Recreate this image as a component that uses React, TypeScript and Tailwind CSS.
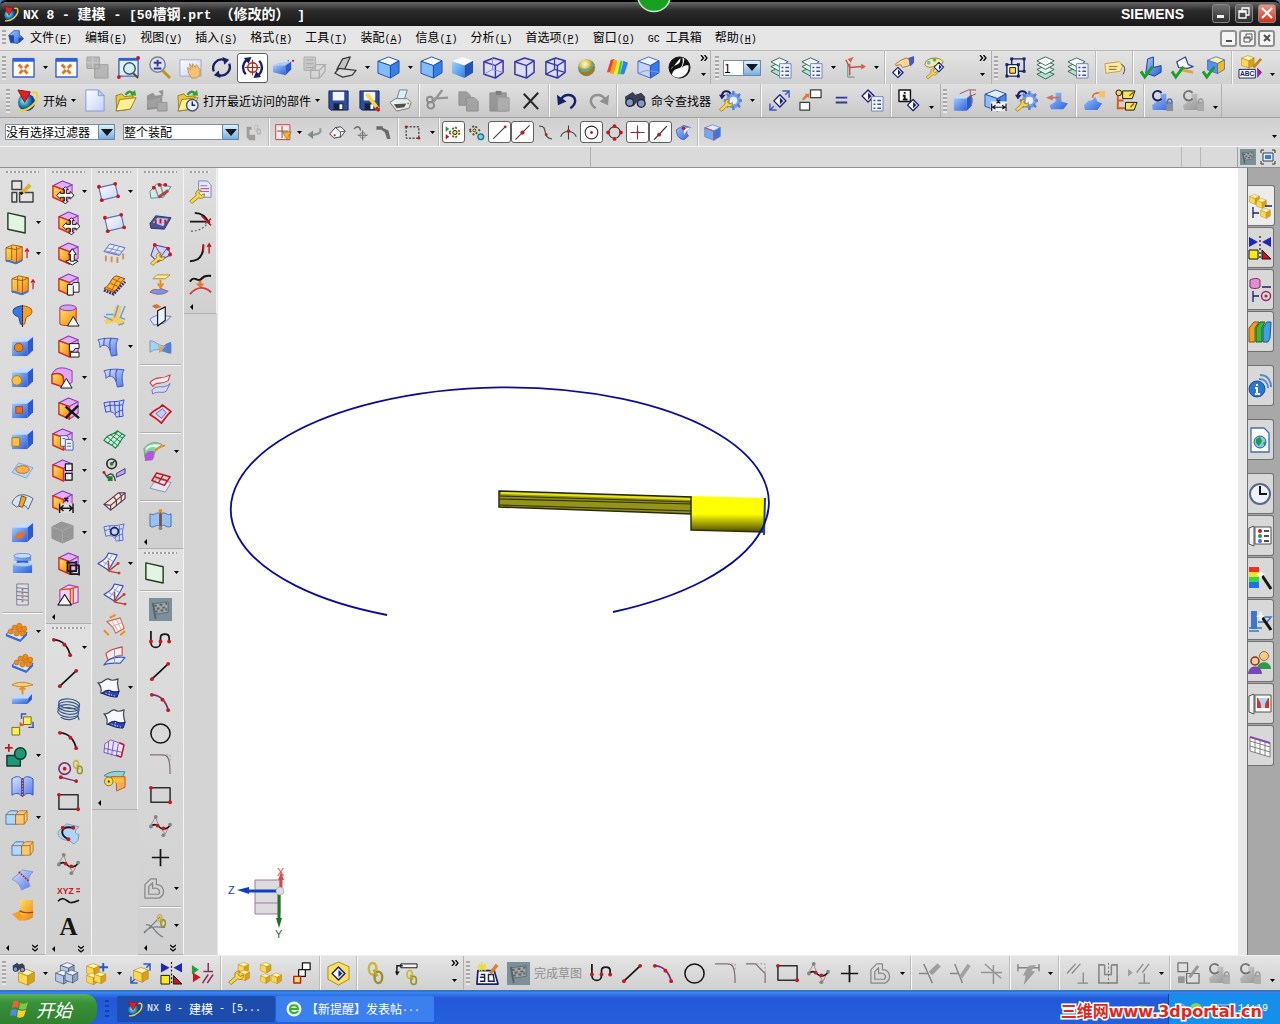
import type { ReactNode } from "react";
import { clsx } from "clsx";

const K = "#151515";
const N = "#18206c";
const R = "#c41820";
const B = "#3c6cd8";
const O = "#ee8c18";
const Y = "#f8d848";
const G = "#858585";
const W = "#ffffff";

// drawing helpers, all in a 24 x 24 box
const ln = (d: string, stroke = K, width = 1.5, dash?: string) => (
    <path d={d} fill="none" stroke={stroke} strokeWidth={width} strokeDasharray={dash} />
);
const fl = (d: string, fill: string, stroke = "none", width = 1) => (
    <path d={d} fill={fill} stroke={stroke} strokeWidth={width} strokeLinejoin="round" />
);
const dot = (cx: number, cy: number, fill = R, r = 2) => <circle cx={cx} cy={cy} r={r} fill={fill} />;
const ring = (cx: number, cy: number, r: number, stroke = K, width = 1.5, fill = "none") => (
    <circle cx={cx} cy={cy} r={r} fill={fill} stroke={stroke} strokeWidth={width} />
);
const at = (x: number, y: number, s: number, node: ReactNode) => (
    <g transform={`translate(${x} ${y}) scale(${s})`}>{node}</g>
);

const cube = (top: string, left: string, right: string, stroke = "none") => (
    <>
        {fl("M1 5.5 12 1l11 4-9 5z", top, stroke)}
        {fl("M1 5.5 14 10v13L1 18z", left, stroke)}
        {fl("M23 5v12.5L14 23V10z", right, stroke)}
    </>
);
const yellowCube = cube("#fff4b0", "#fcd850", "#d8a020", "#b08818");
const blueBox = (
    <>
        {fl("M1 7 8 2h15l-6 5z", "#c4dcff")}
        {fl("M17 7l6-5v14l-6 6z", "#2c58d0")}
        {fl("M1 7h16v15H1z", "url(#gBlue)")}
    </>
);
const partBox = (
    <>
        {fl("M2 6 12 1l10 4-9 5z", "#e0b0ff", "#8838b0", 1.2)}
        {fl("M22 5v12l-9 6V10z", "#e4b0f4", "#9848b8", 1.2)}
        {fl("M2 6l11 4v13L2 18z", "url(#gYellow)", "#d03028", 1.5)}
    </>
);
const wire = (
    <>
        {fl("M2 6 12 2l10 3v12l-8 6-12-4z", "#dcdcf6", "#3838a8", 1.6)}
        {ln("M2 6l12 4 8-5M14 10v13", "#3838a8", 1.5)}
    </>
);
const sheet = (fill: string, stroke: string) => (
    <>
        {fl("M1 6C8 4 14 6 22 3c-2 6-2 10-1 17l-7 1C12 16 8 14 3 16z", fill, stroke)}
        {ln("M7 5l1 10M12 5l1 13M17 5v16M2 10c8-3 12 0 18-2M13 17c3-2 5-3 8-3", stroke, 1)}
    </>
);
const netSheet = (fill: string, stroke: string) => (
    <>
        {fl("M1 13C6 4 12 8 15 3l8 5c-5 4-5 8-10 13-4-5-8-4-12-8z", fill, stroke, 1.2)}
        {ln("M4 9l12 10M8 7l11 8M12 5l9 6M5 16l11-13M9 18l11-12", stroke, 1)}
    </>
);
const blueSheet = (
    <>
        {fl("M1 5c6-2 14-2 21-1-3 5-2 10-1 17l-6 1c-1-5-2-8-4-10-3-2-5-2-8 1 0-3 0-5-2-8z", "url(#gSheet)", "#4058c8")}
        {ln("M8 3c-1 3-1 5-1 8M15 3c-2 4-2 6-1 13", "#4058c8", 1.2)}
    </>
);
const spline = (
    <>
        {ln("M1 12 7 2l3 9 7 9 5-11", "#a88", 1)}
        {ln("M2 12c3-3 6-2 8 0s7 5 12-1", K, 1.5)}
        {dot(7, 2, G)}{dot(2, 12, G)}{dot(9, 11)}{dot(15, 14)}{dot(22, 10, G)}{dot(15, 21, G)}
    </>
);
const wrench = fl("M2 20l8-7c-2-4 2-8 6-6l-3 3 3 3 4-2c1 5-4 7-7 5l-8 7z", Y, "#907010");
const blades = (
    <>
        {fl("M2 16l9-4 9 4-9 5z", "#b8e0d0", "#306858")}
        {fl("M2 11l9-4 9 4-9 5z", "#e0f4ec", "#306858")}
        {fl("M2 6l9-4 9 4-9 5z", "#fff", "#306858")}
    </>
);
const list = (
    <>
        {fl("M11 8h12v15H11z", "#f4f6ff", "#7080c0")}
        {ln("M13 12h2M17 12h4M13 16h2M17 16h4M13 20h2M17 20h4", "#4050a0", 1.5)}
    </>
);
const check = (stroke = "#18a028") => ln("M1 16l4 6 8-11", stroke, 3);
const diamond = (
    <>
        {fl("M12 3l9 9-9 9-9-9z", "#d0d8f8", N, 2)}
        {fl("M12 5l-7 7 7 7z", "#fff")}
        {fl("M12 7l5 5-5 5z", N)}
    </>
);
const chain = (
    <>
        <ellipse cx="9" cy="7" rx="4" ry="6" fill="none" stroke="#c8b838" strokeWidth="2.5" />
        <ellipse cx="15" cy="16" rx="4" ry="6" fill="none" stroke="#98902c" strokeWidth="2.5" />
        {ln("M10 8l4 7", "#b8a830", 2.5)}
    </>
);
const binoculars = (
    <>
        {fl("M1 8l8-5 3 3 6-2 4 4v8l-5 3-3-6-4 5-8-2z", "#384058")}
        {ring(6, 14, 4, "#202838", 1.5, "#8898c0")}{ring(18, 15, 4, "#202838", 1.5, "#8898c0")}
    </>
);
const gear = (
    <>
        {ring(15, 12, 6, "#78a0e8", 4, "#e8f0ff")}
        {ln("M15 2v4M15 18v4M5 12h4M21 12h3M8 5l3 3M22 5l-3 3M8 19l3-3M22 19l-3-3", "#5880d0", 2.5)}
    </>
);
const folder = (
    <>
        {fl("M2 7l6-2 3 3 9-1-3 14-14 2z", "#e8c838", "#988020")}
        {fl("M2 23 6 11l17-2-6 12z", "#fff098", "#988020")}
        {ln("M12 6c3-4 6-4 8-1", "#30a030", 2.5)}{fl("M17 6l6 1-1-6z", "#30a030")}
    </>
);
const disk = (
    <>
        {fl("M2 2h20v20H4l-2-2z", "#2c4c9c", "#182858")}
        {fl("M6 3h12v9H6z", "#f4f4ff")}
        {fl("M7 15h10v7H7z", "#182040")}{fl("M13 16h3v5h-3z", "#fff")}
    </>
);
const books = (
    <>
        {fl("M1 8l5-6h5L7 8v14H1z", "#f0a020", "#885008")}
        {fl("M8 8l4-6h5l-3 6v14H8z", "#38b840", "#106018")}
        {fl("M15 8l4-6h4l-1 16-2 4h-5z", "#40a0e0", "#185888")}
    </>
);
const arc3 = (color = K) => (
    <>
        {ln("M3 4c9 0 15 7 17 16", color, 1.8)}
        {dot(3, 4)}{dot(14, 9)}{dot(20, 20)}
    </>
);
const lock = (
    <>
        {fl("M1 17l5-4h4V5h6v8h4l3 3-5 6H2z", "url(#gBlue)")}
        {ln("M11 4a5 5 0 1 0 0 6", N, 2)}
        {fl("M16 15h7v8h-7z", "#8890a0")}{ln("M17 15c0-6 5-6 5 0", "#606878", 1.5)}
    </>
);
const flag = (
    <>
        {fl("M0 0h24v24H0z", "#7c909c")}
        {fl("M4 6l16-2v11L6 17z", "#a0a4a4", "#606c70")}
        {ln("M5 8h3M11 7h3M17 6h2M8 11h3M14 10h3M6 14h3M12 13h3M17 12h2M4 5l3 17", "#586468", 2)}
    </>
);
const balls = (
    <>
        {fl("M1 15 8 9l15 4-7 8z", "#d0e4ff", "#2450c0")}
        {fl("M1 15l15 6 7-8v3l-7 7-15-6z", "#3468d8")}
        {[[6, 12], [10, 8], [12, 14], [16, 10], [18, 14], [15, 6], [20, 9]].map(([x, y]) => (
            <circle key={x} cx={x} cy={y} r="2.7" fill={O} stroke="#b86810" strokeWidth=".6" />
        ))}
    </>
);
const quad = (
    <>
        {fl("M2 8l17-4 3 13-17 4z", "url(#gPale)", "#6070b0", 1.2)}
        {dot(2, 7)}{dot(19, 4)}{dot(22, 17)}{dot(5, 21)}
    </>
);
const extrude = (
    <>
        {fl("M1 6 8 3l10 2v14l-5 3-12-2z", "url(#gYellow)", "#b05808")}
        {ln("M7 4v15M12 5v17M1 6l11 2 6-3", "#b05808", 1)}
        {ln("M23 17V7M21 10l2-3 2 3", R, 1.2)}
        {ln("M1 20c4-2 7 3 11 2l6-3", "#3878d0", 2)}
    </>
);
const swept = (
    <>
        {fl("M1 7C6 9 8 2 12 3c3 2 5 2 10 0-2 6 0 8 1 13-5 2-8 0-11-1-3 0-4 4-8 3C5 14 4 10 1 7z", "#f8f8fc", "#404858", 1.3)}
        {fl("M5 18c3-3 5-3 8-3 3 2 6 2 10 1l-2 6c-5 0-9-1-16-4z", "#2c48b8", "#101c68")}
        {ln("M9 18l10 3M13 16v4", "#fff", 1, "1 2")}
    </>
);
const csysSheet = (
    <>
        {fl("M1 12C8 8 10 6 12 1l9 2c-3 7-6 10-9 16-3-2-6-4-11-7z", "#f4f4ff", "#3848c0", 1.2)}
        {ln("M6 10l9 5M11 6l6 4M7 15l9-12", "#8898d8", 1)}
        {ln("M12 20V9M12 20l11 2M12 20l10-8", "#b84030", 1.5)}
        {dot(23, 22, "#b84030", 1.5)}{dot(22, 12, "#b84030", 1.5)}
    </>
);
const redSheet = (
    <>
        {fl("M1 12C6 6 10 7 14 2l9 7c-4 3-6 7-10 12-4-4-7-6-12-9z", "#e8d8e8", R, 1.8)}
        {fl("M7 11c3-2 5-3 7-5l4 4-5 6z", "#c8ccf4", "#5868b8")}
    </>
);
const sketchShape = (
    <>
        {ln("M2 2v12c0 7 10 7 10 0V9c0-5 9-5 9 0v4", K, 1.8)}
        {dot(2, 13)}{dot(12, 13)}{dot(21, 13)}
    </>
);
const segment = (
    <>
        {ln("M3 20 20 4", K, 1.8)}{dot(3, 20)}{dot(20, 4)}
    </>
);
const rectShape = (
    <>
        {fl("M2 4h20v15H2z", "none", "#303030", 1.6)}{dot(2, 4)}{dot(22, 19)}
    </>
);
const offsetShape = (
    <>
        {fl("M2 22V8l6-6h6v6c7 0 11 9 3 14z", "none", "#888", 1.3)}
        {fl("M6 18v-8l4-4v6c6-2 9 3 6 6z", "none", "#888", 1.3)}
    </>
);
const mirror = (
    <>
        {fl("M1 1l9 5-9 5zM23 1l-9 5 9 5z", "#2028b0")}
        {ln("M12 0v24", K, 1.2, "2 2")}
        {fl("M1 14h9v9H1z", "#f8e820", K)}{fl("M14 14l9 9h-9z", R, K)}
    </>
);
const globe = (
    <>
        <circle cx="11" cy="14" r="9" fill="url(#gGlobe)" />
        {ln("M3 22C12 24 24 14 22 5c-1-2-3-2-5-1", "#f0d030", 2.2)}
        {fl("M2 1l13 2-6 11z", "#e02020", "#a01010")}
    </>
);
const rainbow = (
    <>
        {fl("M1 17 5 4l4-1-4 14z", "#f04030")}{fl("M4 18 8 4l4 1-4 14z", "#f8a020")}
        {fl("M8 19l4-14 3 1-3 13z", "#f0f020")}{fl("M12 19l3-14h2l-2 14z", "#30d060")}
        {fl("M15 19l3-14 5 2-4 12z", "#3080f0")}
    </>
);
const ccwArrows = (
    <>
        {ln("M4 16A9 9 0 0 1 15 4", N, 2.5)}
        {ln("M20 8A9 9 0 0 1 9 20", N, 2.5)}
        {fl("M13 1l7 3-5 5zM11 23l-7-3 5-5z", N)}
    </>
);
const bodyPlate = (
    <>
        {fl("M1 16l6-5h16l-5 6z", "#c0d8ff")}{fl("M1 16h17v6H1z", "url(#gBlue)")}{fl("M18 17l5-6v6l-5 5z", "#2c58d0")}
    </>
);
const smallAssembly = cube("#eef2fc", "#b8c8e4", "#90a0c4", "#384868");

const icons: Record<string, ReactNode> = {
    fit: (
        <>
            {fl("M1 3h22v19H1z", "#fdfdff", "#3c60c8", 1.5)}{fl("M1 2h22v4H1z", "#3060d8")}
            {ln("M7 9l10 10M17 9 7 19", "#e07818", 3, "5 3")}
        </>
    ),
    stack: <>{fl("M1 1h13v12H1zM9 9h14v14H9z", "#9c9c9c", "#707070")}{ln("M1 7h13M7 1v12", "#c0c0c0", 1)}</>,
    zoomWindow: (
        <>
            {fl("M2 3h20v18H2z", "#e8f0ff", "#4068d0", 1.5)}{fl("M2 2h20v3H2z", "#3060d8")}
            {ring(13, 13, 6, "#305868", 1.5, "#d4f0f4")}{ln("M17 18l5 5", "#604818", 2)}{dot(22, 2)}{dot(2, 22)}
        </>
    ),
    zoom: (
        <>
            {ring(10, 9, 8, "#808088", 1.5, "#dfe2f4")}{ln("M10 4v7M6 7h8M6 13h8", "#303898", 2)}
            {ln("M15 15l8 8", "#b89820", 3)}
        </>
    ),
    pan: (
        <>
            {fl("M1 4h22v17H1z", "url(#gPale)", "#a0a8c8")}
            {fl("M10 18l-1-6 3 2-1-6 3 4 0-4 3 4 1-3 4 5v6l-4 3h-5z", "#f8c070", "#b88840", 0.8)}
        </>
    ),
    rotate: ccwArrows,
    orbit: (
        <>
            {ln("M5 19A10 10 0 0 1 8 3M19 5a10 10 0 0 1-3 16", N, 2.5)}{fl("M3 2l8-1-3 7zM21 22l-8 1 3-7z", N)}
            {ring(12, 12, 5, "#b82010", 1.5)}{ln("M12 4v16M4 12h16", "#b82010", 1.2)}
        </>
    ),
    perspective: (
        <>
            {fl("M1 10l6-3 13-1-6 4z", "#a8ccff")}{fl("M1 10h13v10l-13-3z", "url(#gBlue)")}{fl("M14 10l6-4v8l-6 6z", "#2c58c8")}
            {dot(22, 5, R, 1.2)}{dot(17, 5, B, 0.8)}
        </>
    ),
    truncate: <>{fl("M1 1h12v14H1z", "#b8b8b8", "#888")}{ln("M3 4h8M3 8h8M3 12h8M8 15h9v8H8zM8 15l6-6h9l-6 6M23 9v7l-6 7", "#888", 1.3)}</>,
    hinge: (
        <>
            {fl("M3 14 9 3l8-2-6 13z", "#c4c4c4", "#383838", 1.3)}
            {fl("M1 18l4-5 9 1 9 1-4 5-10 2z", "#dcdcdc", "#383838", 1.3)}
        </>
    ),
    cubeEdge: cube("#f8fcff", "#80bcff", "#3880e8", "#1c50b0"),
    cubeShade: cube("#f4faff", "url(#gShade)", "#2454b8"),
    wireA: <>{wire}{ln("M2 19l9-5 11 3M11 2v12", "#8888d8", 1)}</>,
    wireB: wire,
    wireC: <>{wire}{ln("M2 19l9-5 11 3M11 2v12", "#3838a8", 1.3)}</>,
    ball: <><circle cx="12" cy="12" r="9" fill="url(#gBall)" />{ln("M4 13c6 3 12 1 16-5", "#58a8b0", 2)}</>,
    rainbow,
    cubeGlass: <>{fl("M1 5.5 12 1l11 4-9 5z", "#eef4ff", "#4868c8")}{fl("M1 5.5 14 10v13L1 18z", "#c4d4fc", "#4868c8")}{fl("M14 10l9-5v12.5L14 23z", "#3878f0", "#2850b0")}{ln("M1 18l9-3 13 2", "#8898d8", 1)}</>,
    yinyang: (
        <>
            {ring(12, 12, 11, K, 1, "#111")}
            {fl("M15 1.500A11 11 0 0 1 12 22.500c-4 0-6-1-8-3 2-6 5-6 8-7s4-6 3-11z", "#fff")}
            {fl("M17 2c3 2 5 5 5 8-3-1-6 0-8 3 2-4 3-7 3-11z", "#111")}
            {fl("M13 2c0 4-1 6-4 7s-5 2-6 5", "#fff")}
        </>
    ),
    layerList: <>{blades}{list}</>,
    layers: <>{at(0, 3, 1, blades)}{fl("M2 5l9-4 9 4-9 5z", "#fff", "#306858")}</>,
    csys: (
        <>
            {ln("M7 20V8M7 12l13-1M7 12 3 4", "#c85040", 1.5)}{ln("M5 22V9M5 22h7", "#509090", 1)}
            {fl("M11 1l-6 2 3 4zM24 11l-5-3v6z", "#d86040")}
        </>
    ),
    hand: (
        <>
            {at(-1, 10, 0.6, diamond)}{fl("M4 8l6-4 5-2 4 2-1 6-7 2-2-3-5 1z", "#fcd8a0", "#a87838")}
            {fl("M17 2l6-2v7l-4 4z", "#4858b8")}
        </>
    ),
    palette: (
        <>
            {fl("M2 9c0-8 16-9 19-3-1 4-6 5-9 4-2 2-8 3-10-1z", "#fce8a8", "#a08028")}{dot(6, 7, "#50c8d8")}{dot(12, 4, "#50b850")}
            {at(2, 9, 0.65, wrench)}{at(10, 5, 0.55, diamond)}
        </>
    ),
    group: (
        <>
            {fl("M8 3h13v13H8z", "none", N, 1.5)}{fl("M3 9h12v12H3z", "#fffbe8", N, 1.5)}{fl("M6 12h6v6H6z", "#f8e040", K)}
            {[[8, 3], [21, 3], [21, 16], [3, 9], [15, 9], [3, 21], [15, 21]].map(([x, y]) => (
                <rect key={`${x}-${y}`} x={x - 1.5} y={y - 1.5} width="3" height="3" fill={N} />
            ))}
        </>
    ),
    tag: <>{fl("M2 8l15-2 4 4-3 6-15 2z", "#fce8a0", "#c0a050")}{ln("M6 11h9M6 14h8", "#a08030", 1.2)}{ln("M19 9c5 1 4 7 2 10", "#404040", 1)}</>,
    checkPart: <>{fl("M8 3l6-2v11l8-2v7l-7 4-9-3z", "url(#gBlue)", "#1c3c98")}{check()}</>,
    checkSheet: <>{fl("M6 6l9-5 3 8 5 2-6 2-9-1z", "#fff", "#2848a0", 1.3)}{ln("M9 14l14 3", "#e0a820", 3)}{check()}</>,
    checkBox: <>{at(5, 0, 0.8, cube("#fff0a0", "#5890f0", "#f8b820", "#3868b8"))}{check()}</>,
    abc: (
        <>
            {at(2, -1, 0.6, yellowCube)}{ln("M15 12l8-9", "#c08818", 3)}
            {fl("M0 14h17v9H0z", "#fff", N)}
            <text x="1" y="21" fontSize="7" fontWeight="bold" fontFamily="Liberation Sans, sans-serif" fill={N}>ABC</text>
            {fl("M19 12l5 5-5 6z", "#9020a0")}
        </>
    ),
    globe,
    newFile: <>{fl("M3 1h13l6 6v16H3z", "url(#gPale)", "#8098e0")}{fl("M16 1v6h6z", "#c0d0ff", "#8098e0")}</>,
    folder,
    folderPart: <>{fl("M2 7l6-3 3 3 7-1v14L2 22z", "#606058")}{fl("M2 12l14-3v10H3z", "#787870")}{fl("M13 14h10v9H13z", "#7890a8", "#586878")}{fl("M14 2l5-1v7z", "#506050")}</>,
    folderClock: <>{folder}{ring(17, 17, 6, "#485878", 1.5, "#e8f0fc")}{ln("M17 13v4h3", N, 1.5)}</>,
    disk,
    diskPen: <>{disk}{ln("M9 5l12 16", Y, 4)}{ln("M19 19l3 4", R, 3)}</>,
    print: (
        <>
            {fl("M8 11 11 1h8l-3 10z", "#d8f0f8", "#708090")}{fl("M1 14l6-4h12l4 4-2 6-13 3z", "#ececec", "#787878")}
            {fl("M5 16l13-1-2 4-8 1z", "#505050")}{dot(20, 15, "#30c030", 1)}
        </>
    ),
    cut: <>{ln("M8 13 17 1M8 10l15-1", "#606060", 2.5)}{ring(5, 17, 3.5, "#505050", 2)}{ring(4, 11, 3, "#505050", 2)}</>,
    copy: <>{fl("M2 3h8l4 4v10H2z", "#707070", "#585858")}{fl("M10 9h8l4 4v10H10z", "#808080", "#585858")}</>,
    paste: <>{fl("M2 4h17v19H2z", "#686860", "#585858")}{fl("M8 2h6v4H8z", "#303030")}{fl("M10 9h12v14H10z", "#909090", "#707070")}</>,
    cross: ln("M5 5l15 16M20 4 5 20", "#282828", 2.2),
    undo: <>{ln("M5 11C9 4 19 5 20 12c0 4-2 6-5 8", N, 2.5)}{fl("M1 6l1 11 9-4z", N)}</>,
    redo: <>{ln("M19 11C15 4 5 5 4 12c0 4 2 6 5 8", "#585858", 2.5)}{fl("M23 6l-1 11-9-4z", "#585858")}</>,
    binoculars,
    wrenchGear: <>{gear}{at(-1, 6, 0.75, wrench)}{ln("M3 8C3 1 10 1 12 5", N, 2)}{fl("M0 6h7l-4 5z", N)}</>,
    diamondMove: <>{at(4, 4, 0.7, diamond)}{ln("M15 2h7v7M18 6l4-4M2 15v7h7M2 22l4-4", "#3858c8", 1.5)}</>,
    replace: <>{fl("M12 1h11v8H12zM1 14h10v8H1z", "#fff", "#384038", 1.3)}{fl("M3 12l1-3 3-3-1-1 5 0-1 5-1-2-3 3z", "#e07838")}</>,
    equals: ln("M6 9h12M6 14h12", "#303898", 2),
    diamondList: <>{at(-1, -1, 0.7, diamond)}{list}</>,
    info: (
        <>
            {fl("M1 1h12v12H1z", "#fff", K, 1.5)}{ln("M7 3v2M5 7h2v4M5 11h5", K, 2)}{at(8, 9, 0.65, diamond)}
        </>
    ),
    boxEdges: <>{at(0, 4, 0.85, blueBox)}{ln("M7 5l9-4h8M18 1v7M20 9v6M24 5l-9 4", "#905858", 1)}</>,
    cubeMeasure: (
        <>
            {cube("#e0ecff", "#90bcfc", "#5084e0", "#2450a8")}{fl("M7 13h17v10H7z", "#f0f4ff")}
            {ln("M8 15v8M23 15v8M9 19h13M12 17l-3 2 3 2M19 17l3 2-3 2M13 11l4 4M17 11l-4 4", K, 1.2)}
        </>
    ),
    push: <>{fl("M4 17l6-4V4h6v9l7 2-5 6H5z", "url(#gBlue)")}{fl("M0 9l7-3v2h7v2H7v2z", "#c87070")}</>,
    moveBody: <>{fl("M1 17l5-5h3l4-4 2 5 5 2-5 7H2z", "url(#gBlue)")}{ln("M10 9c0-5 4-5 7-5", "#d87838", 2)}{fl("M17 2h6v7h-6z", "#f8c068")}</>,
    tree: (
        <>
            {ring(5, 4, 3, K, 1, Y)}{ln("M4 7v13h8M4 12h6", "#d85818", 2)}{fl("M9 2h13l-3 8H9zM12 14h12l-3 8h-9z", "#fce060", K)}
            {ln("M16 7l5-4M17 19l4-4", "#a06010", 1.5)}
        </>
    ),
    lock,
    partArrow: <>{fl("M1 8l8-7h8v6l6 5-8 8-11-1z", "url(#gBlue)", "#183888")}{fl("M1 8h8v10l-5 1zM16 11l8 2-8 7z", "#1c48b0")}</>,
    sideParts: <>{fl("M1 4h7v4H5v7h8v8H5l-4-4z", "#707070")}{at(9, 1, 0.6, chain)}</>,
    filter: (
        <>
            {fl("M1 1h20v21H1z", "#fbe8e8", "#c83838", 1.3)}{ln("M10 3v17M3 10h16", "#604040", 1.2)}
            {fl("M11 12l12-1-4 6-1 6-3-4z", "#f0b828", "#987010")}
        </>
    ),
    back: <>{ln("M20 6c2 6-2 9-12 9", "#8c9a96", 3)}{fl("M2 15l8-6v12z", "#7c8c88")}</>,
    eraser: <>{fl("M1 14 9 5l8-1 6 6-6 8-10 2z", "#f8f8fc", "#383848", 1.3)}{ln("M9 5l7 6v8M16 11l7-1", "#383848", 1.2)}{dot(8, 16, R, 1.5)}</>,
    turnPlus: <>{ln("M3 7c4-6 9-2 9 2", K, 2)}{ln("M15 9v14M8 16h14", K, 1.5)}{ring(15, 16, 4, K, 1)}</>,
    turnHammer: <>{fl("M2 3h9v5H2zM10 5l9 4 3 12h-5l-3-9-5-4z", K)}</>,
    dashRect: <>{ln("M3 4h18v16H3z", K, 1.4, "3 2")}{dot(3, 4)}{dot(21, 20)}</>,
    snapAll: (
        <>
            {ln("M6 12l8-8 8 8-8 8z", "#606030", 2.5, "3 3")}{ring(14, 12, 3, K, 1.3, Y)}{fl("M1 3l5 4-5 4z", "#20a030")}
            {fl("M1 14l5 4-5 4z", R)}
        </>
    ),
    snapGear: <>{ln("M2 9l7-7 7 7-7 7z", "#505030", 2.5, "3 3")}{ring(9, 9, 2, K, 1, Y)}{ring(18, 18, 4, "#28788c", 2, "#80d0e0")}</>,
    snapEnd: <>{ln("M3 21 20 4", "#404040", 1.5)}{dot(20, 4)}</>,
    snapMid: <>{ln("M2 22 22 2", "#404040", 1.5)}{dot(12, 12, R, 3)}</>,
    snapCurve: <>{ln("M3 3c14-1 3 17 18 18", "#505050", 1.8)}{dot(13, 15)}</>,
    snapCross: <>{ln("M12 2v20M1 18c3-10 18-10 22 0", "#404040", 1.5)}{dot(12, 10, R, 2.5)}</>,
    snapCenter: <>{ring(12, 12, 9, "#303030", 1.5)}{dot(12, 12)}</>,
    snapQuad: <>{ring(12, 12, 8, "#303030", 1.5)}{dot(12, 3, R, 2.7)}{dot(12, 21, R, 2.7)}{dot(3, 12, R, 2.7)}{dot(21, 12, R, 2.7)}</>,
    snapPoint: <>{ln("M12 2v20M2 12h20", "#704040", 1.6)}{dot(12, 12, R, 1.6)}</>,
    snapOn: <>{ln("M3 22 21 3", "#303030", 1.8)}{dot(10, 15, R, 2.7)}</>,
    snapFace: <>{fl("M2 8l10-6 10 3c-6 4-7 7-3 12l-6 5C6 22 2 16 2 8z", "url(#gBlue)", "#3050b0")}{fl("M22 5c-8 0-11 5-9 10 2-4 5-6 9-10z", "#e8f0ff")}{dot(12, 6, R, 2.5)}</>,
    cubeRed: <>{cube("#d8ecff", "#70a8f8", "#3c74e0", "#6080c0")}{ln("M1 5l13 5v13", "#d84040", 1.3)}</>,

    // left columns
    sketch: (
        <>
            {fl("M1 1h10v9H1zM1 13h5v10H1zM9 13h14v10H9z", "#e4e4e4", "#404040", 1.5)}{ln("M12 13 20 5", "#e0b028", 4)}{ln("M10 15l2-2", K, 2.5)}
        </>
    ),
    plane: fl("M3 2l18 4v17L3 19z", "#e4f4e4", "#204020", 1.5),
    extrude,
    revolve: (
        <>
            {fl("M3 5c4-3 8-3 9-3v20c-4 0-2-7-5-9-4-1-6-4-4-8z", "#3878e0", "#183c98")}
            {fl("M21 5c-4-3-8-3-9-3v20c4 0 2-7 5-9 4-1 6-4 4-8z", "#f8a028", "#a05008")}{ln("M12 1v23", K, 1, "2 1")}
        </>
    ),
    hole: <>{blueBox}<circle cx="8" cy="13" r="4.500" fill="#e8881c" stroke="#a04808" /></>,
    boss: <>{blueBox}{ring(6, 15, 5, "#b07818", 1, "#fcc040")}</>,
    pocket: <>{blueBox}{fl("M5 10h7v7H5z", "#e87028", "#a84818")}</>,
    pad: <>{blueBox}{fl("M1 10h8v9H1z", "#fcc040", "#b07818")}</>,
    emboss: <>{fl("M1 14 8 4l15 5-7 11z", "#b8d4fc", "#80a8e0")}<ellipse cx="12" cy="11" rx="7" ry="4" fill="#fcb050" stroke="#c07018" /></>,
    rib: <>{fl("M1 14C3 6 12 1 23 9l-5 11c-3-5-9-6-12-2z", "#d4e4f4", "#506080")}{fl("M8 17l3-11 5 2-4 10z", "#e8a838", "#805010")}</>,
    slot: <>{blueBox}{fl("M3 18l4-6h8l-3 6z", "#e87028")}</>,
    groove: (
        <>
            {fl("M3 4h18v5H3zM2 13h20v9H2z", "url(#gBlue)")}{fl("M6 9h12v4H6z", "#2c58c8")}
            <ellipse cx="12" cy="4" rx="9" ry="2.500" fill="#c4dcff" stroke="#4870c8" strokeWidth=".7" />
            <ellipse cx="12" cy="13" rx="10" ry="2" fill="#a8ccff" />
        </>
    ),
    thread: (
        <>
            {fl("M6 1h12v22H6z", "#dcdfe6", "#788090")}{ln("M6 5l12 1M6 9l12 1M6 13l12 1M6 17l12 1", "#788090", 1.2)}{ln("M12 6v14", "#c87070", 2, "2 2")}
        </>
    ),
    balls,
    projectBody: <>{at(0, 2, 0.95, bodyPlate)}{fl("M1 3c7-4 15-3 22 0-8 2-15 3-22 0z", "#fcd080", "#c08828")}{ln("M12 5v8M9 8l3-3 3 3", O, 2)}</>,
    explode: (
        <>
            {fl("M1 15h8v8H1zM13 4h8v8h-8z", "#f8f050", "#806818")}{ln("M11 6V1h5M23 9v6M18 15h6", "#3050c0", 1.5)}{fl("M9 14V9l5 4z", "#e05820")}
        </>
    ),
    unite: <>{fl("M2 12h14v11H2z", "#209878", "#103c30", 1.5)}{ring(16, 10, 6, "#103c30", 1.5, "#209878")}{ln("M4 0v8M0 4h8", R, 1.8)}</>,
    draft: (
        <>
            {fl("M1 4c4-3 8-3 10 0v18c-3-4-7-3-10-1zM23 4c-4-3-8-3-10 0v18c3-4 7-3 10-1z", "url(#gSheet)", "#2c58c8")}
            {ln("M12 3v21", R, 1.5, "2 1")}
        </>
    ),
    trimBox: (
        <>
            {fl("M1 9l4-4h8v14H1z", "#b0d8ff", "#4878b8")}{fl("M11 9l4-4h8v10l-3 4h-9z", "#fcc870", "#c07818")}{ln("M1 9h19l3-4M11 9v10M20 9v10", "#a07040", 1)}
        </>
    ),
    trimSheet: <>{fl("M1 12 12 2l11 2c-5 5-6 9-3 15l-9 4C9 17 6 14 1 12z", "url(#gSheet)", "#8098d8")}{ln("M8 4l11 10", R, 1.5, "2 1")}</>,
    orangePatch: <>{fl("M9 1h14v18c-5 4-10 4-16 3l3-9z", "url(#gYellow)")}{fl("M1 16l9-4v4l4 2-5 5z", "#f8a020")}{ln("M9 12c4 4 8 2 14 2", "#984008", 1.2)}</>,
    moveFace: (
        <>
            {partBox}{fl("M15 7l3 3h-2v4h4v-2l4 4-4 4v-2h-4v4h2l-3 3-3-3h2v-4h-4v2l-4-4 4-4v2h4v-4h-2z", "#fff", K, 1)}
        </>
    ),
    pullFace: <>{partBox}{fl("M9 20l6-2 7 2-6 4z", "#fff", K)}{fl("M16 7l4 6h-2v7h-4v-7h-2z", "#fff", K)}</>,
    copyFace: <>{partBox}{fl("M11 12h5l1-2h6v10h-6v3h-6z", "#fff", K)}{ln("M17 13v7", K, 1)}</>,
    cylFace: (
        <>
            {fl("M3 4v17c3 2 13 2 17 0V4z", "url(#gYellow)", "#c82828")}<ellipse cx="11.500" cy="4" rx="8.500" ry="3" fill="#d8a0f0" stroke="#8838b0" />
            {fl("M17 13l6 10H11z", "#fff", K)}
        </>
    ),
    swapFace: <>{partBox}{fl("M13 9h10v5h-4l-2 3h-4zM14 18h9v5h-9z", "#fff", K)}</>,
    blendFace: <>{fl("M1 9C4 1 12 0 22 5v12l-9 6-1-11c-3-3-6-3-11-3z", "#e0a8f4", "#8838b0")}{fl("M1 9c7-3 12 0 12 4v9L1 18z", "url(#gYellow)", "#c82828", 1.5)}{fl("M16 13l6 10H10z", "#fff", K)}</>,
    deleteFace: <>{partBox}{ln("M9 10l14 12M22 9 9 22", K, 2.5)}</>,
    pasteFace: <>{partBox}{fl("M10 8h6l2 2v9h-8z", "#e8f0ff", "#506090")}{fl("M15 12h6l2 2v9h-8z", "#e8f0ff", "#506090")}{ln("M17 16h4M17 19h4M12 11h3", "#506090", 1)}</>,
    patternFace: <>{partBox}{fl("M15 5h7v7h-7zM15 15h7v7h-7z", "#f0f0f0", K, 1.3)}</>,
    dimFace: <>{partBox}{fl("M8 14h16v10H8z", "#dcdcdc")}{ln("M9 14v10M23 14v10M10 19h12M13 16l-3 3 3 3M19 16l3 3-3 3M14 8l4 4M18 8l-4 4", K, 1.5)}</>,
    grayBody: <>{fl("M1 6 11 1l12 4v13l-11 5L1 18z", "#70607c", "#685878")}{ln("M1 6l11 4 11-5M12 10v13", "#8c8094", 1)}</>,
    groupFace: <>{partBox}{fl("M11 11h9v9h-9zM14 14h9v9h-9z", "none", K, 1.8)}{ln("M10 11h2M19 11h2M10 20h2M22 23h2", N, 3)}</>,
    shellFace: <>{fl("M3 7l9-5 10 2v16l-9 3H3z", "#f4d0f8", "#a048b8", 1.2)}{ln("M3 7l11-1v16M14 6l8-2M17 6v15", "#e05818", 1.5)}{fl("M8 12l7 11H1z", "#fff", K, 1.2)}</>,
    arc: arc3(),
    arcBlue: arc3("#802870"),
    line: segment,
    helix: (
        <>
            {[6, 9, 12, 15].map((y) => (
                <ellipse key={y} cx="12" cy={y} rx="11" ry="5" fill="none" stroke="#385888" strokeWidth="1.2" transform="rotate(6 12 12)" />
            ))}
            {ln("M4 20c6 4 14 3 18-1l1 4", "#385888", 1.2)}
        </>
    ),
    pointChain: <>{ring(8, 9, 6, "#783878", 1.8)}{dot(8, 9)}{at(14, 0, 0.65, chain)}{ln("M4 18l16 4", "#783878", 1.5)}{dot(4, 18)}{dot(20, 22)}</>,
    rect: rectShape,
    curveFace: <>{fl("M1 10l9-8 13 3c-6 4-4 8 0 8l-1 6-4 4-6-4C6 19 1 17 1 10z", "#b0d4f8", "#8098b8")}{ln("M17 6C3 3 2 14 12 18", K, 2)}{dot(17, 6)}{dot(6, 6)}{dot(12, 18)}</>,
    spline,
    xyz: (
        <>
            <text x="0" y="10" fontSize="9" fontWeight="bold" fontFamily="Liberation Sans, sans-serif" fill={R}>XYZ</text>
            {ln("M20 5h4M20 8h4", R, 1.3)}{ln("M1 18c6-6 9 0 12 1s6 0 10-2", K, 1.8)}
        </>
    ),
    text: (
        <text x="12" y="21" textAnchor="middle" fontSize="26" fontWeight="bold" fontFamily="Liberation Serif, serif" fill={K}>A</text>
    ),
    quad,
    gridDrop: <>{fl("M1 10 7 2l16 4-6 8z", "#e8eeff", "#5868c8")}{ln("M4 6l16 4M6 12l6-8M11 13l6-8M2 9l16 4", "#7888d0", 1)}{ln("M3 14v6M9 15v6M15 16v6M21 12v6", "#c89848", 2)}</>,
    ribbon: <>{fl("M1 16C9 12 8 4 14 3l9 3c-6 3-5 10-12 14z", "#fcb030", "#904808")}{ln("M4 15l9 4M8 11l8 3M10 6l9 4M9 18c3-4 3-9 9-13", "#a86010", 1)}{ln("M1 18l10 4 12-13", "#403060", 3, "2 1")}</>,
    yPatch: <>{fl("M1 17l9-4 3-11h7l-4 12 7 4-3 5-8-4-9 2z", "#f8cc60")}{ln("M16 1l-4 13M23 2l-5 12 5 2M1 13l9 4M3 11h8M16 22l6-2", "#60a0e0", 1.5)}</>,
    blueSheet,
    netBlue: sheet("#ccd4fc", "#3848c0"),
    netGreen: netSheet("#c8f0d8", "#187848"),
    splitCurves: (
        <>
            {ring(9, 5, 5, "#303030", 1.8)}{ln("M9 5l3-3", "#303030", 1.5)}{dot(9, 5, "#208038")}{ln("M1 14l4 6M4 18c6-6 8 1 9 5", "#484848", 1.5)}{dot(1, 14, R, 1.5)}
            {fl("M14 15l9-5v5l-9 4z", "#b8a8f0", "#483080")}{fl("M5 18h5v5H5z", "#208038")}
        </>
    ),
    prism: <>{fl("M1 15 16 3h7v6L8 21z", "#fce4c0", "#583868", 1.3)}{ln("M1 15l7 1 15-13M8 16v5M11 7l3 4v6M17 3l2 3v7", "#583868", 1.2)}</>,
    holeSheet: <>{sheet("#d4dcfc", "#5868d0")}{ring(12, 11, 4, N, 1.8, "#c8d4f4")}</>,
    csysSheet,
    bandSheet: <>{fl("M4 8l14-4 4 11-9 5c-1-6-5-9-9-12z", "#fff8f4", "#d06850", 1.2)}{ln("M9 7l7 11M14 6l5 10M9 13l11-4", "#e0a0a0", 1)}{ln("M7 4l6-3M1 17l5 5M18 22l5-4", O, 2)}</>,
    bendSheet: <>{fl("M3 9C9 3 14 4 20 2v9C14 11 10 12 6 18z", "#fcecec", "#c84848", 1.2)}{fl("M1 21c4-8 13-9 22-8l-5 6c-6 0-12-1-17 2z", "#e4eaff", "#3858c0", 1.2)}{ln("M12 4v16", "#8898c8", 1)}</>,
    swept,
    tubeSheet: <>{fl("M2 6l6-4 14 5-3 13L1 15z", "#ece0fc", "#7058c8")}{ln("M6 3 5 16M11 4 9 18M16 6l-2 12M2 11l18 4", "#7058c8", 1)}{ln("M22 7l-3 13M17 5l5 2M14 18l5 2", R, 1.5)}</>,
    roll: <>{fl("M1 7c7-5 12-5 22-4l-3 6H8z", "#90d4d8", "#408890")}{fl("M8 8h15v11l-9 4v-8z", "#fca860", "#b86018")}{fl("M3 10h18v4H3z", "#f0c830")}{ring(6, 13, 4.5, "#987010", 1, Y)}{dot(6, 13, K, 1)}</>,
    stripes: <>{fl("M1 12 8 4l15 3-8 11-13 1z", "#c8eef0", "#608890")}{ln("M6 7l4 11M12 5l3 11", "#c87878", 1.5)}{dot(5, 8)}{dot(11, 5)}{dot(17, 5)}{ln("M10 18l10-7", "#a84840", 3)}</>,
    redPins: <>{fl("M1 13 7 5l16 2-7 12-14-1z", "#485498", "#303868")}{fl("M4 12l5-5 11 1-5 8z", "#b8c8f0")}{ln("M7 9v5M12 8v5M17 9v5", R, 2)}</>,
    wrenchSheet: <>{fl("M6 3l13 3 4 7-14 8-7-7z", "#ccd4fc", "#6048a8", 1.2)}{ln("M6 3l9 15M19 6 9 20", "#6048a8", 1)}{at(0, 6, 0.8, wrench)}{dot(6, 3)}{dot(20, 7)}{dot(22, 13)}</>,
    dropSheet: <>{fl("M4 6l4-4h14l-5 4z", "#fce8a0", "#b89028")}{ln("M12 7v7M9 11l3 4 3-4", O, 2)}{fl("M1 20c5-6 8 0 11-4l8 3c-4 4-12 4-19 1z", "#7098e8", "#b85868")}</>,
    mirrorSheet: <>{fl("M1 16c6-6 12-4 22-3l-7 7-11 2z", "#e0e4fc", "#6878c0")}{fl("M9 7l8-4v14l-8 6z", "#ecf4ff", K, 1.2)}{fl("M13 3 7 5l-4-3 5-2z", "#d87030")}</>,
    twist: <>{fl("M1 6c8 0 11 10 22 3v10c-9 0-12-8-22-1z", "#a8d0f0", "#78a0c8")}{fl("M10 18c3-3 5-9 13-11v12c-5 1-6-4-13-1z", "#5880d0")}{fl("M9 10c3 4 6 2 9 1l-7 8z", "#d0a878")}</>,
    offsetSheet: <>{fl("M1 11C8 3 12 9 22 3l-2 6c-8 5-12 0-16 6z", "#f4e8f0", "#c84848", 1.2)}{fl("M3 19c6-7 12 0 19-7l-4 8c-5 3-8-1-14 3z", "#d4d8fc", "#7070b8")}</>,
    redSheet,
    paintSheet: <>{fl("M1 9C6 2 14 1 20 5c-6 3-8 7-9 14-4 0-7 3-9-1z", "#80d898", "#889888")}{fl("M2 15c4-5 7-4 10-3l-2 9-8 1z", "#b058d8")}{fl("M3 8c5-4 11-4 16-3l-5 3C9 6 6 8 3 11z", "#e0f4fc")}{ln("M13 11c4-4 6-5 10-5", O, 2)}</>,
    gridRed: <>{fl("M1 18 8 8l15 4-6 10z", "#e4e4f0", "#8890b0")}{fl("M3 10l5-8 14 4-6 9z", "none", R, 1.6)}{ln("M6 6l13 4M10 12l5-8", R, 1.4)}</>,
    flip: <>{fl("M1 6c5 3 7-3 10 0v13c-3-3-6 3-10 0zM13 6c4-3 6 3 10 0v13c-4 3-7-3-10 0z", "#98c0f0", "#4870b0")}{ln("M12 2v20", "#905018", 2)}{dot(12, 3, O)}{dot(12, 21, G)}</>,
    flag,
    profile: sketchShape,
    circle: ring(12, 12, 10, K, 1.6),
    fillet: <>{ln("M1 2h13c6 0 8 4 8 20", "#807070", 1.3)}{ln("M14 2h8v7", "#a09898", 1, "2 2")}</>,
    chamfer: <>{ln("M1 2h10l10 10v10", "#807070", 1.3)}{ln("M12 2h9v9", "#a09898", 1, "2 2")}</>,
    plus: ln("M12 3v18M3 12h18", K, 1.8),
    offset: offsetShape,
    curveLink: <>{ln("M1 20 18 3M1 19c8-8 14-5 22-5M3 11c9 0 8 9 18 13", "#788088", 1.3)}{at(12, 0, 0.6, chain)}</>,
    editFeature: <>{fl("M10 1h9l4 4v13H10z", "#e4e8fc", "#7888c8")}{ln("M12 6h7M12 9h9M12 12h9", "#c06080", 1.2)}{at(-1, 5, 0.85, wrench)}</>,
    trimCurve: <>{ln("M1 11h21M6 2c8 0 12 4 15 11", K, 1.8)}{ln("M2 21c9 0 14-4 17-8", "#606060", 1.3, "2 2")}{ln("M13 5l10 10M23 8l-6 5", R, 1.5)}</>,
    extendCurve: <>{ln("M1 20c10 0 14-6 14-17", K, 2)}{ln("M15 2v9M21 3v9M19 5l2-3 2 3", R, 1.5)}</>,
    offsetCurve: <>{ln("M1 9c5-8 8 2 12-3 3-4 6-3 10-3", K, 2.2)}{fl("M10 8h3v3h3l-4 5-5-5h3z", "#e87838")}{ln("M1 22c7-8 15-8 22-2", "#d83838", 2)}</>,

    // bottom bar
    findPart: <>{at(6, 7, 0.75, yellowCube)}{at(0, -1, 0.6, binoculars)}</>,
    assembly: <>{at(5, 0, 0.65, smallAssembly)}{at(0, 8, 0.65, smallAssembly)}{at(10, 8, 0.6, smallAssembly)}</>,
    addPart: <>{at(0, 1, 0.6, yellowCube)}{at(0, 11, 0.55, yellowCube)}{at(8, 10, 0.55, yellowCube)}{ln("M18 1v9M14 5.500h9", "#2058d0", 2)}</>,
    movePart: <>{at(4, 5, 0.7, yellowCube)}{ln("M15 2h7v7M18 6l4-4M2 15v7h7M2 22l4-4", "#3058c8", 1.5)}</>,
    mirror,
    constraints: <>{fl("M1 3l7 5-7 5z", "#20a038")}{fl("M2 11l8 5-8 5z", R)}{ln("M18 1v9M13 10h10M12 22l6-9M17 22l6-9", "#883060", 1.6)}</>,
    wrenchPart: <>{at(10, 0, 0.5, yellowCube)}{at(11, 8, 0.5, yellowCube)}{at(-1, 4, 0.85, wrench)}</>,
    parts: <>{at(1, 0, 0.5, yellowCube)}{at(1, 12, 0.45, yellowCube)}{at(12, 11, 0.5, yellowCube)}</>,
    sequence: <>{fl("M13 1h8v7h-8z", "#fff", K, 1.3)}{fl("M9 8h7v7H9z", "#fff", K, 1.3)}{fl("M4 15h7v7H4z", "#fce060", R, 1.5)}</>,
    diamondBox: <>{fl("M12 0l11 5v13l-11 6-11-6V5z", "#fce060", "#a88818")}{at(3, 3, 0.75, diamond)}</>,
    chain,
    chainBar: <>{fl("M6 2h17v4H6z", "#f4f4f4", K)}{ln("M8 4H2v9", K, 1.5)}{fl("M0 10h5l-3 4z", K)}{at(9, 8, 0.7, chain)}</>,
    sketchNew: <>{fl("M2 9h17l4 14H1z", "#fff", N, 1.8)}{ln("M5 13h4v7H4M4 16h5M13 20V13h5l1 7z", N, 1.5)}{ln("M6 0v10M1 5h10M3 2l7 7M10 2 3 9", "#e8e020", 1.5)}{ln("M15 12l7-9", "#d08828", 3.5)}</>,
    quickTrim: <>{ln("M1 12h10M6 2l9 20", "#404040", 1.5)}{ln("M13 12l9-9", "#806858", 5)}</>,
    quickExtend: <>{ln("M1 12h8M6 2l8 20", "#404040", 1.5)}{ln("M12 16 21 3", "#787850", 4)}</>,
    makeCorner: ln("M1 11h22M14 3v20M5 2l17 15", "#805050", 1.5),
    autoDim: <>{ln("M1 2v8M23 2v8M1 6h22", "#404040", 1.5)}{fl("M12 4l8-1-5 6 4 1-12 14 2-10H6z", "#707048")}</>,
    geoConstraint: <>{ln("M1 12l9-10M6 12l9-10M18 11v11M12 22h11", "#484848", 1.4)}</>,
    symmetric: <>{ln("M8 3H2v19h19V3h-6M8 3v10h7V3", "#583838", 1.6)}{ln("M12 1v22", K, 1, "2 2")}</>,
    showConstraint: <>{fl("M0 7l5 4-5 4z", "#388848")}{ln("M9 11l7-9M15 11l7-9M17 12v10M11 22h12", "#484848", 1.4)}</>,
    sketchEdit: <>{fl("M1 1h10v9H1zM10 12h13v10H10z", "#e4e4e4", K, 1.3)}{fl("M1 15h7v7H1z", "#606060")}{ln("M13 16l9-12", "#806030", 3)}</>,

    // resource bar
    partNav: <>{at(1, 0, 0.45, yellowCube)}{at(8, 4, 0.45, yellowCube)}{at(12, 14, 0.45, yellowCube)}{ln("M5 13v11M5 19h6M17 12h7", N, 1.3)}</>,
    constraintNav: <>{fl("M2 2c4-2 8-2 10 0v7c-2 2-8 2-10 0z", "#e090d0", "#802868")}{ln("M14 9h9M5 13v11M5 18h6", N, 1.3)}{ring(18, 18, 4.5, "#a02870", 1.5)}{dot(18, 18, R, 1.5)}</>,
    books,
    web: <>{ring(9, 15, 8, "#1850a0", 1, "#2878d0")}{ln("M9 10v2M7 14h2v6M7 20h5", W, 2)}{ln("M11 5c6 0 9 4 9 9M12 1c8 0 11 6 11 12", "#5888c8", 2)}</>,
    page: <>{fl("M3 0h13l5 5v19H3z", "#fff", "#4070a8", 1.3)}{ring(12, 14, 6, "#2060a0", 1, "#80c8e8")}{fl("M8 11l4-2 2 4-3 5-3-3zM15 15l3-2-1 5z", "#289840")}</>,
    clock: <>{ring(12, 12, 10, "#586888", 2, "#eef2fc")}{ln("M12 4v8h7", K, 2)}</>,
    roles: <>{fl("M1 4l5-2v20l-5-2z", "#f4f4f4", "#505050")}{fl("M7 3h16v17H7z", "#fff", "#505050")}{dot(12, 7)}{dot(12, 12, "#20a040")}{dot(12, 17, B)}{ln("M16 7h5M16 12h5M16 17h5", K, 1.3)}</>,
    spectrum: <>{fl("M1 1h10v5H1z", "#f03020")}{fl("M1 6h10v5H1z", "#f8e020")}{fl("M1 11h10v5H1z", "#30d850")}{fl("M1 16h10v6H1z", "#2070f0")}{ln("M13 8l10 15", K, 3)}{fl("M13 4l1 3 3 1-3 2-1 3-2-3-3-2 3-1z", "#fff")}</>,
    process: <>{fl("M3 3h6v18H3z", "#3c78d0")}{ln("M1 20h13M1 23h10M10 9h13l-4 5h-9", "#3878c0", 1.5)}{ln("M14 9l9 13", K, 3)}{fl("M13 3l1 4 3 1-3 2-1 3-2-3-3-2 3-1z", "#fff")}</>,
    people: <>{ring(16, 6, 4.5, "#a06828", 1, "#f8c890")}{fl("M9 19c0-9 14-9 14 0z", "#309848")}{ring(7, 11, 4, "#803818", 1.5, "#f8c8a0")}{fl("M0 24c0-10 14-10 14 0z", "#7848b8")}</>,
    image: <>{fl("M1 4l5-2v20l-5-2z", "#f4f4f4", "#505050")}{fl("M7 3h16v17H7z", "#fff", "#505050")}{fl("M9 6h12v10H9z", "#d83020")}{fl("M10 6c1 4 3 2 3 10h4c0-8 2-6 3-10z", "#a8d8fc")}</>,
    table: <>{fl("M2 3l20 6v14L2 17z", "#fff", "#808080")}{ln("M2 3l20 6", "#8848b0", 2)}{ln("M2 7l20 6M2 12l20 6M7 5v14M12 6v14M17 8v14", "#808080", 1)}</>,
};

function Icon({ name, className = "size-6" }: { name: string; className?: string }) {
    return (
        <svg viewBox="0 0 24 24" aria-hidden="true" className={clsx("shrink-0 overflow-visible", className)}>
            {icons[name]}
        </svg>
    );
}

function Gradients() {
    const stops: [string, string, string][] = [
        ["gBlue", "#9cc8ff", "#3060d8"],
        ["gSheet", "#dce6ff", "#5078e8"],
        ["gShade", "#a0d4ff", "#3080e8"],
        ["gYellow", "#ffe860", "#f08018"],
        ["gPale", "#ffffff", "#c4d0fc"],
    ];
    return (
        <svg aria-hidden="true" className="absolute size-0">
            <defs>
                {stops.map(([id, from, to]) => (
                    <linearGradient key={id} id={id} x1="0" y1="0" x2="1" y2="1">
                        <stop offset="0" stopColor={from} />
                        <stop offset="1" stopColor={to} />
                    </linearGradient>
                ))}
                <radialGradient id="gGlobe" cx=".35" cy=".4">
                    <stop offset="0" stopColor="#c0f4e8" />
                    <stop offset=".5" stopColor="#30a0c8" />
                    <stop offset="1" stopColor="#104088" />
                </radialGradient>
                <radialGradient id="gBall" cx=".4" cy=".3">
                    <stop offset="0" stopColor="#fffce0" />
                    <stop offset=".5" stopColor="#dccc60" />
                    <stop offset="1" stopColor="#908030" />
                </radialGradient>
                <linearGradient id="gSolid" x1="0" y1="0" x2="0" y2="1">
                    <stop offset=".5" stopColor="#ffff00" />
                    <stop offset="1" stopColor="#4c4c00" />
                </linearGradient>
            </defs>
        </svg>
    );
}

// Latin runs are set smaller so that they keep half the width of a Chinese character
function Mixed({ text, latin = "text-[10px]" }: { text: string; latin?: string }) {
    return (
        <>
            {text.split(/([\x20-\x7e]+)/).map((run, i) =>
                i % 2 ? (
                    <span key={i} className={clsx("font-['Liberation_Mono',monospace] whitespace-pre", latin)}>{run}</span>
                ) : (
                    run
                )
            )}
        </>
    );
}

function Caret({ low = false, small = false }: { low?: boolean; small?: boolean }) {
    return (
        <button type="button" aria-label="More" className={clsx("flex shrink-0 justify-center", small ? "w-2" : "w-3", low ? "items-end self-stretch pb-2" : "items-center")}>
            <svg viewBox="0 0 5 3" className="h-[3px] w-[5px]"><path d="M0 0h5L2.500 3z" /></svg>
        </button>
    );
}

function Chevrons({ className }: { className?: string }) {
    return (
        <svg viewBox="0 0 8 6" className={clsx("h-1.5 w-2", className)}>
            <path d="M1 0l2.500 3L1 6M4.500 0 7 3 4.500 6" fill="none" stroke="#000" strokeWidth="1.3" />
        </svg>
    );
}

function Overflow() {
    return (
        <button type="button" aria-label="Toolbar options" className="ml-auto flex w-[17px] shrink-0 flex-col items-center justify-between self-stretch pt-1 pb-2">
            <Chevrons />
            <svg viewBox="0 0 5 3" className="h-[3px] w-[5px]"><path d="M0 0h5L2.500 3z" /></svg>
        </button>
    );
}

function Grip() {
    return <span className="h-6 w-2 shrink-0 border-x-2 border-transparent bg-[repeating-linear-gradient(#a8a8a8_0_2px,#e8e8e8_2px_4px)] bg-clip-padding" />;
}

// "|" separator, "+" gap, "v" drop-down arrow, "V" arrow at the foot, ">>" overflow,
// "*name" pressed, "~name" disabled, "=text" caption, "-text" disabled caption
function Tool({ item, small = false }: { item: string; small?: boolean }) {
    if (item === "|") return <span className="mx-0.5 w-0.5 shrink-0 self-stretch border-l border-[#bcbcbc] bg-[#f8f8f8]" />;
    if (item === "+") return <span className="w-1 shrink-0" />;
    if (item === "v") return <Caret small={small} />;
    if (item === "V") return <Caret low />;
    if (item === ">>") return <Overflow />;
    if (item[0] === "=" || item[0] === "-") {
        return <span className={clsx("shrink-0", item[0] === "-" && "text-[#909090]")}>{item.slice(1)}</span>;
    }
    const on = item[0] === "*";
    const off = item[0] === "~";
    const name = on || off ? item.slice(1) : item;
    return (
        <button
            type="button"
            aria-label={name}
            disabled={off}
            className={clsx(
                "flex shrink-0 items-center justify-center rounded-[3px] border",
                small ? "h-[22px] w-[23px]" : "h-[30px] w-[31px]",
                on ? "border-[#606060] bg-white" : "border-transparent",
                off && "opacity-55 grayscale"
            )}
        >
            <Icon name={name} className={small ? "size-[17px]" : "size-[23px]"} />
        </button>
    );
}

function Tools({ items, className, grip = true, small = false }: { items: string; className?: string; grip?: boolean; small?: boolean }) {
    return (
        <div role="toolbar" className={clsx("flex items-center", className)}>
            {grip && <Grip />}
            {items.split(" ").map((item, i) => <Tool key={i} item={item} small={small} />)}
        </div>
    );
}

function Select({ label, value, className, arrow }: { label: string; value: string; className: string; arrow: string }) {
    return (
        <div className={clsx("relative h-4 shrink-0", className)}>
            <select aria-label={label} className="block h-4 w-full appearance-none border border-[#7890a8] bg-white text-xs leading-[14px] outline-none">
                <option>{value}</option>
            </select>
            <span className={clsx("pointer-events-none absolute inset-y-0 right-0 flex items-center justify-center rounded-xs border border-[#6888a8] bg-linear-to-b from-[#e0f0fc] to-[#78b0dc]", arrow)}>
                <svg viewBox="0 0 12 7" className="h-[7px] w-3"><path d="M0 0h12L6 7z" fill="#101820" /></svg>
            </span>
        </div>
    );
}

function TitleBar() {
    const button = "flex h-[19px] w-[18px] items-center justify-center rounded-[3px] border border-[#888]";
    return (
        <header className="flex h-[26px] shrink-0 items-center rounded-t-md border-t-2 border-black bg-linear-to-b from-[#686868] via-[#2c2c2c] via-35% to-[#181818] pl-[3px] text-white">
            <Icon name="globe" className="size-4" />
            <h1 className="ml-1 text-sm leading-5 font-bold"><Mixed text="NX 8 - 建模 - [50槽钢.prt （修改的） ]" latin="text-[13px]" /></h1>
            <span className="ml-auto pr-7 font-['Liberation_Sans',sans-serif] text-sm font-bold">SIEMENS</span>
            <div className="flex gap-[5px] pr-1 pb-0.5">
                <button type="button" aria-label="Minimize" className={clsx(button, "bg-linear-to-b from-[#707070] to-[#303030]")}>
                    <svg viewBox="0 0 12 12" className="size-3"><path d="M2 8h7v3H2z" fill="#fff" /></svg>
                </button>
                <button type="button" aria-label="Restore" className={clsx(button, "bg-linear-to-b from-[#707070] to-[#303030]")}>
                    <svg viewBox="0 0 12 12" className="size-3"><path d="M4 4V1h7v7H8M1 4h7v7H1zM1 5h7" fill="none" stroke="#fff" strokeWidth="1.300" /></svg>
                </button>
                <button type="button" aria-label="Close" className={clsx(button, "bg-linear-to-b from-[#f09080] to-[#d03018]")}>
                    <svg viewBox="0 0 12 12" className="size-3"><path d="M1 1l10 10M11 1 1 11" stroke="#fff" strokeWidth="2" /></svg>
                </button>
            </div>
        </header>
    );
}

const menus = [
    ["文件", "F"], ["编辑", "E"], ["视图", "V"], ["插入", "S"], ["格式", "R"], ["工具", "T"], ["装配", "A"],
    ["信息", "I"], ["分析", "L"], ["首选项", "P"], ["窗口", "O"], ["GC 工具箱", ""], ["帮助", "H"],
];

function MenuBar() {
    const button = "flex h-[17px] w-[17px] items-center justify-center rounded-[3px] border-2 border-[#909090] bg-[#f4f4f4]";
    return (
        <nav className="flex h-6 shrink-0 items-center bg-[#e6e6e6]">
            <span className="h-4 w-2 border-x-2 border-transparent bg-[repeating-linear-gradient(#a8a8a8_0_2px,#e8e8e8_2px_4px)] bg-clip-padding" />
            <Icon name="partArrow" className="size-4" />
            <div className="ml-1.5 flex gap-[13px]">
                {menus.map(([name, key]) => (
                    <button key={name} type="button" className="shrink-0 leading-4 whitespace-nowrap">
                        <Mixed text={name} />
                        {key && <span className="font-['Liberation_Mono',monospace] text-[10px]">(<u>{key}</u>)</span>}
                    </button>
                ))}
            </div>
            <div className="ml-auto flex gap-0.5 pr-[5px]">
                <button type="button" aria-label="Minimize window" className={button}>
                    <svg viewBox="0 0 10 10" className="size-2.5"><path d="M2 7h6v2H2z" fill="#505050" /></svg>
                </button>
                <button type="button" aria-label="Restore window" className={button}>
                    <svg viewBox="0 0 10 10" className="size-2.5"><path d="M3 3V1h6v6H7M1 4h6v5H1zM1 5h6" fill="none" stroke="#505050" /></svg>
                </button>
                <button type="button" aria-label="Close window" className={button}>
                    <svg viewBox="0 0 10 10" className="size-2.5"><path d="M2 2l6 6M8 2 2 8" stroke="#505050" strokeWidth="2" /></svg>
                </button>
            </div>
        </nav>
    );
}

function ColumnFoot({ full = false }: { full?: boolean }) {
    return (
        <div className={clsx("flex h-[13px] shrink-0 items-center justify-between px-1.5", full && "mt-auto")}>
            <svg viewBox="0 0 3 6" className="h-1.5 w-[3px]"><path d="M3 0v6L0 3z" /></svg>
            {full && <Chevrons className="rotate-90" />}
        </div>
    );
}

function Palette({ items, className, full = false }: { items: string; className?: string; full?: boolean }) {
    return (
        <div role="toolbar" className={clsx("flex flex-col border-r border-b border-r-[#f4f4f4] border-b-[#b0b0b0] bg-linear-to-b from-[#e0e0e0] to-[#d0d0d0]", className)}>
            <span className="mx-1.5 h-2 shrink-0 border-y-[3px] border-transparent bg-[repeating-linear-gradient(90deg,#a0a0a0_0_2px,#ececec_2px_4px)] bg-clip-padding" />
            {items.split(" ").map((item, i) =>
                item === "|" ? (
                    <span key={i} className="mx-0.5 my-0.5 h-0.5 shrink-0 border-t border-[#b0b0b0] bg-[#f8f8f8]" />
                ) : (
                    <div key={i} className="flex h-[31px] shrink-0 items-center justify-center">
                        <Tool item={item.replace(",v", "")} />
                        {item.endsWith(",v") && <Caret />}
                    </div>
                )
            )}
            <ColumnFoot full={full} />
        </div>
    );
}

function Viewport() {
    return (
        <main className="relative min-w-0 flex-1 overflow-hidden bg-white">
            <svg className="block size-full">
                <path d="M281 323l193 6v17L281 339z" fill="#949418" stroke="#282808" strokeWidth="1.500" />
                <path d="M283 325l190 6" stroke="#e8e810" strokeWidth="2" />
                <path d="M282 328l192 6M282 331l192 5M282 337l192 6" stroke="#303008" strokeWidth="1.200" />
                <path d="M473 328l74 2v34l-74-2z" fill="url(#gSolid)" />
                <path d="M473 328v34l74 2" fill="none" stroke="#303008" strokeWidth="1.500" />
                <path d="M547 330l-1 37" stroke="#1440b8" strokeWidth="2" />
                <path d="M169 447A269 118.500 -0.920 1 1 395 444" fill="none" stroke="#0c0c98" strokeWidth="1.800" />
            </svg>
            <svg viewBox="0 0 60 80" className="absolute bottom-[11px] left-2 h-20 w-[60px]">
                <path d="M29 16h25v34H29zM29 39h25" fill="#dcdcdc" stroke="#a078a8" />
                <path d="M54 27H22" stroke="#1040c0" strokeWidth="3" />
                <path d="M11 26l12-3v7z" fill="#1040c0" />
                <path d="M55 27V14" stroke="#d84848" strokeWidth="3" />
                <path d="M55 8l-3 8h6z" fill="#d84848" />
                <path d="M53 28v30" stroke="#207028" strokeWidth="3" />
                <path d="M50 54h6l-3 10z" fill="#207028" />
                <circle cx="54" cy="27" r="4" fill="#dcdcdc" stroke="#909090" strokeWidth=".500" />
                <g fontFamily="Liberation Sans, sans-serif" fontSize="11">
                    <text x="2" y="30" fill="#1040c0">Z</text>
                    <text x="51" y="12" fill="#d84848">X</text>
                    <text x="49" y="74" fill="#207028">Y</text>
                </g>
            </svg>
        </main>
    );
}

const resourceGroups = [
    ["partNav", "mirror", "constraintNav", "books"],
    ["web"],
    ["page"],
    ["clock", "roles", "spectrum", "process", "people", "image", "table"],
];

function ResourceBar() {
    return (
        <aside className="flex shrink-0">
            <div className="w-[9px] bg-[#e8e8e8]" />
            <div className="flex w-[33px] flex-col gap-[13px] border-l border-[#707070] bg-[#a8a8a8] pt-[17px]">
                {resourceGroups.map((group) => (
                    <div key={group[0]} className="flex flex-col gap-px">
                        {group.map((name) => (
                            <button
                                key={name}
                                type="button"
                                aria-label={name}
                                className={clsx(
                                    "flex h-[41px] items-center rounded-r-[3px] border border-l-0 border-[#707070]",
                                    name === "partNav" ? "w-[27px] bg-[#ececec]" : "w-[26px] bg-[#d8d8d8]"
                                )}
                            >
                                <Icon name={name} />
                            </button>
                        ))}
                    </div>
                ))}
            </div>
        </aside>
    );
}

function Taskbar() {
    return (
        <footer className="relative flex h-[34px] shrink-0 items-end overflow-hidden border-t-2 border-[#2c78d8] bg-linear-to-b from-[#3c88f0] via-[#2458d8] via-20% to-[#2460dc] text-white">
            <button type="button" className="flex h-[30px] w-[97px] items-center rounded-r-xl bg-linear-to-b from-[#58b058] via-[#389038] via-30% to-[#308030] pl-2.5 text-lg italic">
                <svg viewBox="0 0 20 20" aria-hidden="true" className="mr-1.5 size-5">
                    <path d="M3 3c2-2 4-1 6 0L8 9C6 8 4 8 2 9z" fill="#f06030" />
                    <path d="M10 4c3 1 5 1 8-1l-2 7c-2 1-5 1-7 0z" fill="#80c840" />
                    <path d="M1 11c2-1 4-1 6 0l-1 6c-2-1-4-1-6 0z" fill="#5088f0" />
                    <path d="M8 11c3 1 5 1 8 0l-2 6c-2 2-5 2-7 1z" fill="#f8d030" />
                </svg>
                开始
            </button>
            <span className="mx-2 mb-1 h-5 w-1 bg-[repeating-linear-gradient(#1840a0_0_2px,transparent_2px_5px)]" />
            <button type="button" className="mb-0.5 flex h-[26px] w-[158px] items-center rounded-xs bg-[#1c4cac] pl-2.5">
                <Icon name="globe" className="mr-1 size-4" />
                <Mixed text="NX 8 - 建模 - [5..." />
            </button>
            <button type="button" className="mb-0.5 ml-px flex h-[26px] w-[158px] items-center rounded-xs bg-[#3c80f0] pl-2.5">
                <svg viewBox="0 0 16 16" aria-hidden="true" className="mr-1 size-4">
                    <circle cx="8" cy="8" r="7.500" fill="#e8ffe8" />
                    <path d="M12 10c-2 3-8 3-8-2s8-5 8 0H5" fill="none" stroke="#38b038" strokeWidth="2" />
                </svg>
                <Mixed text="【新提醒】发表帖..." />
            </button>
            <div className="ml-auto flex h-[30px] w-28 items-center justify-end gap-1 border-l border-[#1040a0] bg-[#1490ec] pr-3">
                <svg viewBox="0 0 60 16" aria-hidden="true" className="h-4 w-[60px]">
                    <circle cx="6" cy="8" r="6" fill="#70a0f0" />
                    <circle cx="22" cy="8" r="6" fill="#90d050" />
                    <path d="M32 6h3l4-4v12l-4-4h-3z" fill="#d8d8d8" />
                    <path d="M44 4h12v8H44z" fill="#203c90" stroke="#d0d8f0" />
                </svg>
                <time className="font-['Liberation_Mono',monospace] text-[10px]">14:19</time>
            </div>
            <svg viewBox="0 0 20 12" aria-hidden="true" className="absolute right-32 bottom-2 h-3 w-5">
                <path d="M2 10c2-10 14-10 16 0" fill="none" stroke="#30a030" strokeWidth="3" />
            </svg>
            <p className="absolute right-[18px] bottom-0.5 font-['DejaVu_Sans','Noto_Sans_CJK_SC',sans-serif] text-base leading-5 font-bold whitespace-nowrap text-[#e02820] [-webkit-text-stroke:3px_#ffffff] [paint-order:stroke_fill]">
                三维网www.3dportal.cn
            </p>
        </footer>
    );
}

export default function App() {
    return (
        <div className="flex h-screen min-h-[1000px] flex-col overflow-hidden bg-[#d4d4d4] font-['Noto_Sans_CJK_SC',sans-serif] text-xs leading-4 text-black">
            <Gradients />
            <div className="relative bg-[#4878a8]">
                <TitleBar />
                <svg viewBox="0 0 36 14" aria-hidden="true" className="absolute top-0 left-[51.1%] h-3.5 w-9 -translate-x-1/2">
                    <circle cx="18" cy="-5" r="16.500" fill="#18a020" stroke="#c8e8c8" strokeWidth="1.500" />
                </svg>
            </div>
            <MenuBar />

            <div className="flex h-[34px] shrink-0 border-t border-[#b8b8b8] bg-linear-to-b from-[#e4e4e4] to-[#d0d0d0]">
                <Tools className="w-[711px] shrink-0 border-r border-[#b0b0b0]" items="fit v fit ~stack zoomWindow zoom pan rotate *orbit perspective ~truncate hinge v cubeEdge v cubeEdge cubeShade wireA wireB wireC ball rainbow cubeGlass yinyang >>" />
                <div className="flex w-[281px] shrink-0 items-center border-r border-[#b0b0b0] pl-0.5">
                    <Grip />
                    <Select label="工作图层" value="1" className="ml-0.5 w-[38px]" arrow="w-[18px]" />
                    <Tools grip={false} className="ml-1 flex-1 self-stretch" items="layerList layerList v csys v | hand palette >>" />
                </div>
                <Tools className="flex-1 overflow-hidden" items="group layers layerList | tag | checkPart checkSheet checkBox | abc V" />
            </div>

            <div className="flex h-[34px] shrink-0 border-b border-[#a0a0a0] bg-linear-to-b from-[#e0e0e0] to-[#c8c8c8]">
                <Tools className="w-[941px] shrink-0 border-r border-[#b0b0b0] pl-1" items="globe =开始 v newFile folder ~folderPart folderClock =打开最近访问的部件 v disk diskPen print | ~cut ~copy ~paste cross | undo ~redo | binoculars =命令查找器 + wrenchGear v | diamondMove replace equals diamondList | info V" />
                <Tools className="border-r border-[#b0b0b0]" items="boxEdges cubeMeasure wrenchGear push | moveBody tree | lock ~lock V" />
            </div>

            <div className="flex h-7 shrink-0 items-center bg-linear-to-b from-[#d0d0d0] to-[#dcdcdc] pl-[5px]">
                <Select label="类型过滤器" value="没有选择过滤器" className="w-[110px]" arrow="w-[17px]" />
                <Select label="选择范围" value="整个装配" className="mr-1 ml-2 w-[116px]" arrow="w-[17px]" />
                <Tools grip={false} small className="flex-1 self-stretch" items="~sideParts | filter v back eraser ~turnPlus ~turnHammer | dashRect + v | *snapAll snapGear *snapEnd *snapMid snapCurve snapCross *snapCenter snapQuad *snapPoint *snapOn snapFace | cubeRed" />
                <Caret low />
            </div>

            <div className="flex h-[22px] shrink-0 items-center border-y border-t-[#f4f4f4] border-b-[#909090] bg-[#dadada]">
                <span className="h-full w-[591px] border-r border-[#b0b0b0]" />
                <span className="ml-auto h-full w-5 border-x border-[#b8b8b8]" />
                <span className="h-full w-9" />
                <span className="flex h-full items-center gap-1 border-l border-[#a0a0a0] pr-1 pl-0.5">
                    <Icon name="flag" className="size-4" />
                    <svg viewBox="0 0 16 16" aria-hidden="true" className="size-4">
                        <path d="M1 4V1h3M12 1h3v3M15 12v3h-3M4 15H1v-3" fill="none" stroke="#303030" />
                        <path d="M3 4h10v8H3z" fill="#e8f4ff" stroke="#303848" />
                        <path d="M5 6h6v4H5z" fill="#3080e0" />
                    </svg>
                </span>
            </div>

            <div className="flex min-h-0 flex-1">
                <Palette full className="w-[46px] shrink-0" items="sketch plane,v extrude,v extrude revolve hole boss pocket pad emboss rib slot groove thread | balls,v balls projectBody explode unite,v draft trimBox,v trimBox trimSheet orangePatch" />
                <div className="flex w-[46px] shrink-0 flex-col">
                    <Palette items="moveFace,v moveFace pullFace copyFace cylFace swapFace blendFace,v deleteFace pasteFace,v patternFace,v dimFace,v ~grayBody,v groupFace shellFace" />
                    <Palette full className="flex-1" items="arc,v line helix arc pointChain rect curveFace spline xyz text" />
                </div>
                <div className="flex w-[46px] shrink-0 flex-col">
                    <Palette items="quad,v quad gridDrop ribbon yPatch blueSheet,v blueSheet netBlue netGreen splitCurves prism holeSheet csysSheet,v csysSheet bandSheet bendSheet swept,v swept tubeSheet roll" />
                </div>
                <div className="flex w-[46px] shrink-0 flex-col">
                    <Palette items="stripes redPins wrenchSheet dropSheet mirrorSheet twist | offsetSheet redSheet | paintSheet,v gridRed | flip" />
                    <Palette full className="flex-1" items="plane,v | flag profile line arcBlue circle fillet rect spline plus offset,v | curveLink,v" />
                </div>
                <div className="flex w-[34px] shrink-0 flex-col border-r border-[#e8e8e8]">
                    <Palette items="editFeature trimCurve extendCurve offsetCurve" />
                </div>
                <Viewport />
                <ResourceBar />
            </div>

            <div className="flex h-[35px] shrink-0 border-t border-[#f0f0f0] bg-linear-to-b from-[#e4e4e4] to-[#d0d0d0]">
                <Tools className="w-[464px] shrink-0 border-r border-[#b0b0b0]" items="findPart v assembly addPart v movePart mirror constraints | wrenchPart parts sequence | diamondBox | chain chainBar >>" />
                <Tools className="flex-1 overflow-hidden" items="sketchNew flag -完成草图 + profile line arcBlue circle fillet chamfer rect spline plus offset v | ~quickTrim ~quickExtend ~makeCorner | ~autoDim v | ~geoConstraint ~symmetric ~showConstraint v | ~sketchEdit ~lock ~lock V" />
            </div>
            <Taskbar />
        </div>
    );
}
